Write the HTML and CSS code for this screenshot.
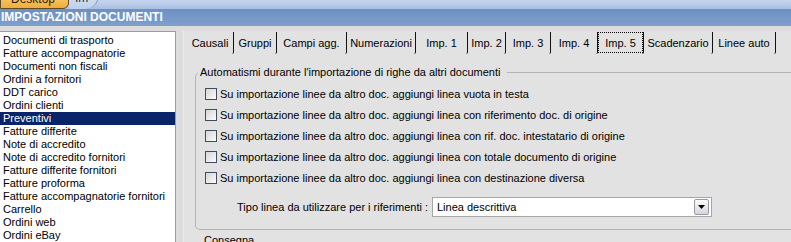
FILE: index.html
```html
<!DOCTYPE html>
<html lang="it">
<head>
    <meta charset="UTF-8">
    <title>Impostazioni documenti</title>
    <link rel="stylesheet" href="styles.css">
</head>
<body>
    <div class="topbar">
        <div class="wtab wtab-desktop">Desktop</div>
        <div class="wtab wtab-other">Im</div>
    </div>
    <div class="titlebar">IMPOSTAZIONI DOCUMENTI</div>

    <div class="main">
        <ul class="doclist">
            <li>Documenti di trasporto</li>
            <li>Fatture accompagnatorie</li>
            <li>Documenti non fiscali</li>
            <li>Ordini a fornitori</li>
            <li>DDT carico</li>
            <li>Ordini clienti</li>
            <li class="selected">Preventivi</li>
            <li>Fatture differite</li>
            <li>Note di accredito</li>
            <li>Note di accredito fornitori</li>
            <li>Fatture differite fornitori</li>
            <li>Fatture proforma</li>
            <li>Fatture accompagnatorie fornitori</li>
            <li>Carrello</li>
            <li>Ordini web</li>
            <li>Ordini eBay</li>
        </ul>

        <div class="pane">
            <div class="tabs">
                <div class="tab">Causali</div>
                <div class="tab">Gruppi</div>
                <div class="tab">Campi agg.</div>
                <div class="tab">Numerazioni</div>
                <div class="tab">Imp. 1</div>
                <div class="tab">Imp. 2</div>
                <div class="tab">Imp. 3</div>
                <div class="tab">Imp. 4</div>
                <div class="tab active"><span>Imp. 5</span></div>
                <div class="tab">Scadenzario</div>
                <div class="tab">Linee auto</div>
            </div>

            <fieldset class="group">
                <legend>Automatismi durante l'importazione di righe da altri documenti</legend>
                <label class="check"><span class="box"></span>Su importazione linee da altro doc. aggiungi linea vuota in testa</label>
                <label class="check"><span class="box"></span>Su importazione linee da altro doc. aggiungi linea con riferimento doc. di origine</label>
                <label class="check"><span class="box"></span>Su importazione linee da altro doc. aggiungi linea con rif. doc. intestatario di origine</label>
                <label class="check"><span class="box"></span>Su importazione linee da altro doc. aggiungi linea con totale documento di origine</label>
                <label class="check"><span class="box"></span>Su importazione linee da altro doc. aggiungi linea con destinazione diversa</label>

                <div class="selrow">
                    <span class="sellabel">Tipo linea da utilizzare per i riferimenti :</span>
                    <div class="select">
                        <span>Linea descrittiva</span>
                        <span class="dropbtn">
                            <svg width="7" height="5" viewBox="0 0 7 5"><path d="M0 0h7L3.5 4z" fill="#000"/></svg>
                        </span>
                    </div>
                </div>
            </fieldset>

            <div class="nextgroup">Consegna</div>
        </div>
    </div>
</body>
</html>
```

FILE: styles.css
```css
* {
    box-sizing: border-box;
}
body {
    margin: 0;
    width: 791px;
    height: 242px;
    overflow: hidden;
    font-family: "Liberation Sans", Arial, sans-serif;
    font-size: 11px;
    color: #000;
    background: #dcdcdc;
}

/* barra finestre in alto */
.topbar {
    display: flex;
    height: 9px;
    overflow: hidden;
    background: linear-gradient(#c6d6ee, #a8bfe2);
}
.wtab {
    height: 20px;
    margin-top: -11px;
    font-size: 12px;
    line-height: 18px;
}
.wtab-desktop {
    width: 69px;
    padding-left: 10px;
    color: #2a2010;
    background: linear-gradient(#fbd68a, #f1ad3a);
    border: 1px solid #5d4b2a;
    border-radius: 0 0 6px 0;
}
.wtab-other {
    width: 30px;
    padding-left: 6px;
    color: #1d2c44;
    background: linear-gradient(#e2ebf8, #bccfeb);
    border-right: 1px solid #7f93b4;
    border-radius: 0 0 14px 0;
}

.titlebar {
    height: 17px;
    line-height: 17px;
    padding-left: 1px;
    font-size: 12px;
    font-weight: bold;
    color: #fff;
    background: linear-gradient(#6d8fc3, #7f9fcc);
}

.main {
    display: flex;
    height: 216px;
    padding-top: 5px;
    background: #dcdcdc;
}

/* elenco tipi documento */
.doclist {
    width: 176px;
    margin: 0;
    padding: 2px 0 0;
    list-style: none;
    background: #fff;
    border: 1px solid #9c9c9c;
    border-left: none;
    border-bottom: none;
}
.doclist li {
    height: 13px;
    line-height: 13px;
    padding-left: 3px;
    white-space: nowrap;
}
.doclist li.selected {
    background: #0a246a;
    color: #fff;
}

/* pannello a schede */
.pane {
    flex: 1;
    margin-left: 7px;
    background: #e2e2e2;
    border-left: 1px solid #ececec;
}
.tabs {
    display: flex;
    height: 22px;
    margin-top: 1px;
    padding-left: 3px;
}
.tab {
    height: 22px;
    line-height: 22px;
    text-align: center;
    white-space: nowrap;
    border-right: 1px solid #111;
    border-bottom-right-radius: 2px;
}
.tab:nth-child(1) { width: 47px; }
.tab:nth-child(2) { width: 43px; }
.tab:nth-child(3) { width: 70px; }
.tab:nth-child(4) { width: 69px; }
.tab:nth-child(5) { width: 52px; }
.tab:nth-child(6) { width: 38px; }
.tab:nth-child(7) { width: 45px; }
.tab:nth-child(8) { width: 47px; }
.tab:nth-child(9) { width: 46px; }
.tab:nth-child(10) { width: 69px; }
.tab:nth-child(11) { width: 63px; }
.tab.active span {
    display: block;
    height: 21px;
    line-height: 20px;
    border: 1px dotted #000;
}

.group {
    margin: 12px -30px 0 11px;
    padding: 4px 0 12px 9px;
    border: 1px solid #b4b4b4;
    border-radius: 5px;
}
.group legend {
    margin-left: -7px;
    padding: 0 7px 0 2px;
    line-height: 13px;
}
.check {
    display: flex;
    align-items: center;
    height: 21px;
    white-space: nowrap;
}
.box {
    width: 12px;
    height: 12px;
    margin-right: 3px;
    border: 1px solid #3e4e60;
    background: linear-gradient(135deg, #d6d6d6, #fbfbfb);
}

.selrow {
    display: flex;
    align-items: center;
    margin-top: 9px;
}
.sellabel {
    width: 223px;
    margin-right: 4px;
    text-align: right;
    white-space: nowrap;
}
.select {
    display: flex;
    align-items: center;
    justify-content: space-between;
    width: 280px;
    height: 20px;
    padding: 0 2px 0 4px;
    background: #fff;
    border: 1px solid #a6a6a6;
}
.dropbtn {
    display: flex;
    align-items: center;
    justify-content: center;
    width: 15px;
    height: 16px;
    border: 1px solid #9a9aa2;
    border-radius: 2px;
    background: linear-gradient(#fdfdfd, #d4d4dc);
}

.nextgroup {
    margin: 4px 0 0 20px;
    line-height: 13px;
}
```
